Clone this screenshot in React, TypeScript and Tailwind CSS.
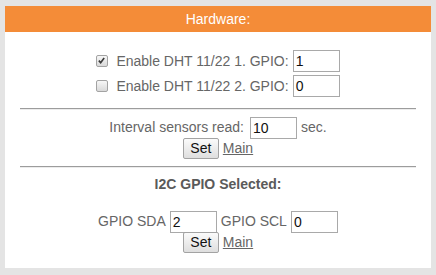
import React from "react";

const font = { fontFamily: '"Liberation Sans", Arial, sans-serif' };

function Check({ checked }: { checked?: boolean }) {
  return (
    <span className="relative inline-block w-[12px] h-[12px] shrink-0 rounded-[2px] border border-[#a3a3a3] bg-gradient-to-b from-[#f7f7f7] to-[#d9d9d9]">
      {checked && (
        <svg viewBox="0 0 12 12" className="absolute left-[0px] top-[0px] w-[10px] h-[10px]">
          <path d="M2.2 5.6 L4.4 8 L8.6 2.4" fill="none" stroke="#3a3a3a" strokeWidth="2" />
        </svg>
      )}
    </span>
  );
}

function Field({ value }: { value: string }) {
  return (
    <span className="inline-flex items-center w-[47px] h-[22px] border border-[#a9a9a9] bg-white pl-[2px] text-[14px] text-[#111] leading-none shrink-0">
      {value}
    </span>
  );
}

function SetMain() {
  return (
    <div className="flex justify-center items-center h-[20px] gap-[4px]">
      <span className="inline-flex items-center justify-center w-[36px] h-[21px] rounded-[2px] border border-[#a3a3a3] bg-gradient-to-b from-[#fbfbfb] to-[#dedede] text-[14px] text-[#111]">
        Set
      </span>
      <span className="text-[14px] text-[#666] underline">Main</span>
    </div>
  );
}

function Hr() {
  return (
    <div className="h-[2px] border-t border-[#9c9c9c] border-b border-b-[#ececec]" />
  );
}

export default function App() {
  return (
    <div className="w-[436px] h-[275px] bg-[#e4e4e4] pt-[6px] px-[5px]" style={font}>
      <div className="bg-white h-[262px]">
        <div className="h-[26px] bg-[#f48c38] text-white text-[14px] flex items-center justify-center">
          Hardware:
        </div>
        <div className="px-[15px] text-[14px] text-[#666]">
          <div className="pt-[18px] flex justify-center items-center h-[22px] box-content">
            <Check checked />
            <span className="ml-[8px] mr-[4px]">Enable DHT 11/22 1. GPIO:</span>
            <Field value="1" />
          </div>
          <div className="mt-[3px] flex justify-center items-center h-[22px]">
            <Check />
            <span className="ml-[8px] mr-[4px]">Enable DHT 11/22 2. GPIO:</span>
            <Field value="0" />
          </div>
          <div className="mt-[11px]">
            <Hr />
          </div>
          <div className="mt-[7px] flex justify-center items-center h-[21px]">
            <span className="mr-[6px]">Interval sensors read:</span>
            <Field value="10" />
            <span className="ml-[4px]">sec.</span>
          </div>
          <SetMain />
          <div className="mt-[8px]">
            <Hr />
          </div>
          <div className="mt-[8px] h-[16px] leading-[16px] text-center font-bold text-[#5a5a5a]">
            I2C GPIO Selected:
          </div>
          <div className="mt-[19px] flex justify-center items-center h-[21px]">
            <span className="mr-[4px]">GPIO SDA</span>
            <Field value="2" />
            <span className="ml-[4px] mr-[4px]">GPIO SCL</span>
            <Field value="0" />
          </div>
          <SetMain />
        </div>
      </div>
    </div>
  );
}
